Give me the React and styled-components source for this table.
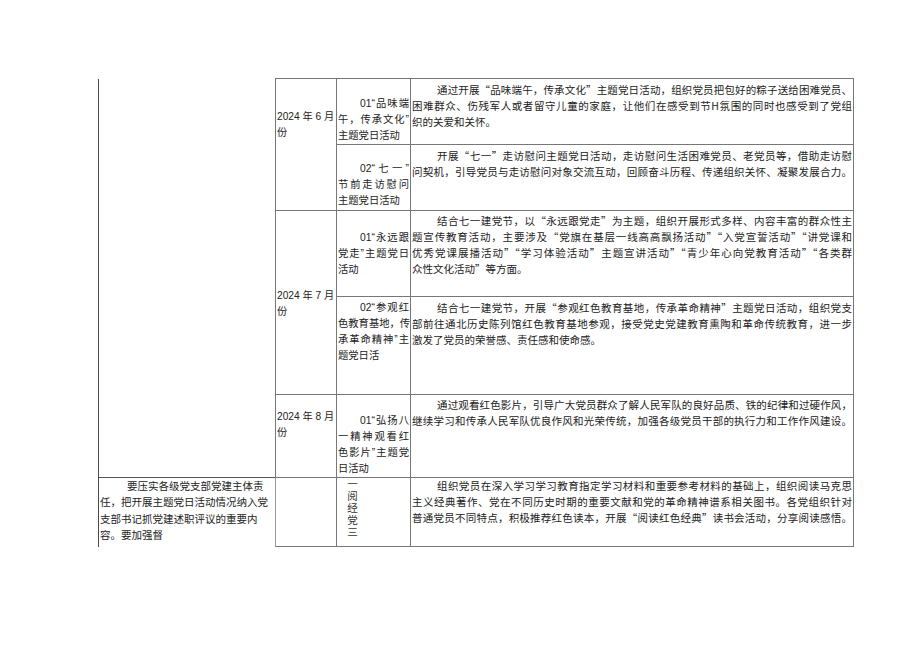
import React from 'react'
import styled, { createGlobalStyle } from 'styled-components'

const GlobalStyle = createGlobalStyle`
  body {
    margin: 0;
    background: #ffffff;
    color: #222222;
    font-family: "Noto Sans CJK SC", "Liberation Sans", sans-serif;
  }
`

const Page = styled.div`
  padding: 78px 0 0 98px;
`

const Table = styled.table`
  border-collapse: collapse;
  table-layout: fixed;
  width: 755px;
  font-size: 10.5px;
  line-height: 16px;
`

const Row = styled.tr`
  height: ${p => p.$h}px;
`

const cellBase = `
  vertical-align: top;
  padding: 0 1px;
  border: 1px solid #777;
`

const BlankCell = styled.td`
  border: none;
  border-left: 1px solid #4a4a4a;
  padding: 0;
`

const NoteCell = styled.td`
  vertical-align: top;
  padding: 0 2px 0 1px;
  border-left: 1px solid #4a4a4a;
  border-top: 1px solid #555;
  border-right: 1px solid #999;
  border-bottom: none;
  line-height: 16.3px;
`

const MonthCell = styled.td`
  ${cellBase}
  padding-top: ${p => p.$pt || 0}px;
  font-family: "Liberation Sans", "Noto Sans CJK SC", sans-serif;
  font-size: 10.2px;
`

const ActCell = styled.td`
  ${cellBase}
  padding-top: ${p => p.$pt || 0}px;
  font-family: "Liberation Sans", "Noto Sans CJK SC", sans-serif;
  font-size: 10.3px;
`

const DescCell = styled.td`
  ${cellBase}
  padding-top: ${p => p.$pt || 0}px;
`

const Line = styled.span`
  display: block;
  white-space: nowrap;
  text-indent: ${p => p.$indent || 0}px;
  text-align: ${p => (p.$fill ? 'justify' : 'left')};
  text-align-last: ${p => (p.$fill ? 'justify' : 'auto')};
`

const Vertical = styled.div`
  width: 11px;
  margin-left: 9px;
  line-height: 12px;
  font-size: 10.5px;
  text-align: center;
  color: #333;
`

const Para = ({ lines, indent = 0, fillLast = false }) => (
  <>
    {lines.map((t, i) => (
      <Line key={i} $indent={i === 0 ? indent : 0} $fill={i < lines.length - 1 || fillLast}>
        {t}
      </Line>
    ))}
  </>
)

const Month = ({ n }) => (
  <>
    <Line>2024 年 {n} 月</Line>
    <Line>份</Line>
  </>
)

export default function App() {
  return (
    <Page>
      <GlobalStyle />
      <Table>
        <colgroup>
          <col style={{ width: 177 }} />
          <col style={{ width: 61 }} />
          <col style={{ width: 74 }} />
          <col style={{ width: 443 }} />
        </colgroup>
        <tbody>
          <Row $h={66}>
            <BlankCell rowSpan={5} />
            <MonthCell rowSpan={2} $pt={30}>
              <Month n={6} />
            </MonthCell>
            <ActCell $pt={17}>
              <Para indent={22} lines={['01“品味端', '午，传承文化”', '主题党日活动']} />
            </ActCell>
            <DescCell $pt={3}>
              <Para
                indent={25}
                lines={[
                  '通过开展“品味端午，传承文化”主题党日活动，组织党员把包好的粽子送给困难党员、',
                  '困难群众、伤残军人或者留守儿童的家庭，让他们在感受到节H氛围的同时也感受到了党组',
                  '织的关爱和关怀。',
                ]}
              />
            </DescCell>
          </Row>
          <Row $h={66}>
            <ActCell $pt={16}>
              <Para indent={22} lines={['02“七一”', '节前走访慰问', '主题党日活动']} />
            </ActCell>
            <DescCell $pt={3}>
              <Para
                indent={25}
                fillLast
                lines={[
                  '开展“七一”走访慰问主题党日活动，走访慰问生活困难党员、老党员等，借助走访慰',
                  '问契机，引导党员与走访慰问对象交流互动，回顾奋斗历程、传递组织关怀、凝聚发展合力。',
                ]}
              />
            </DescCell>
          </Row>
          <Row $h={86}>
            <MonthCell rowSpan={2} $pt={77}>
              <Month n={7} />
            </MonthCell>
            <ActCell $pt={19}>
              <Para indent={22} lines={['01“永远跟', '党走”主题党日', '活动']} />
            </ActCell>
            <DescCell $pt={2}>
              <Para
                indent={25}
                lines={[
                  '结合七一建党节，以“永远跟党走”为主题，组织开展形式多样、内容丰富的群众性主',
                  '题宣传教育活动，主要涉及“党旗在基层一线高高飘扬活动”“入党宣誓活动”“讲党课和',
                  '优秀党课展播活动”“学习体验活动”主题宣讲活动”“青少年心向党教育活动”“各类群',
                  '众性文化活动”等方面。',
                ]}
              />
            </DescCell>
          </Row>
          <Row $h={98}>
            <ActCell $pt={3}>
              <Para indent={22} lines={['02“参观红', '色教育基地，传', '承革命精神”主', '题党日活']} />
            </ActCell>
            <DescCell $pt={3}>
              <Para
                indent={25}
                lines={[
                  '结合七一建党节，开展“参观红色教育基地，传承革命精神”主题党日活动，组织党支',
                  '部前往通北历史陈列馆红色教育基地参观，接受党史党建教育熏陶和革命传统教育，进一步',
                  '激发了党员的荣誉感、责任感和使命感。',
                ]}
              />
            </DescCell>
          </Row>
          <Row $h={83}>
            <MonthCell $pt={14}>
              <Month n={8} />
            </MonthCell>
            <ActCell $pt={18}>
              <Para indent={22} lines={['01“弘扬八', '一精神观看红', '色影片”主题党', '日活动']} />
            </ActCell>
            <DescCell $pt={2}>
              <Para
                indent={25}
                fillLast
                lines={[
                  '通过观看红色影片，引导广大党员群众了解人民军队的良好品质、铁的纪律和过硬作风，',
                  '继续学习和传承人民军队优良作风和光荣传统，加强各级党员干部的执行力和工作作风建设。',
                ]}
              />
            </DescCell>
          </Row>
          <Row $h={69}>
            <NoteCell>
              <Line $indent={27}>要压实各级党支部党建主体责</Line>
              <Line>任，把开展主题党日活动情况纳入党</Line>
              <Line>支部书记抓党建述职评议的重要内</Line>
              <Line>容。要加强督</Line>
            </NoteCell>
            <MonthCell />
            <ActCell>
              <Vertical>
                {['一', '阅', '经', '党', '三'].map(c => (
                  <div key={c}>{c}</div>
                ))}
              </Vertical>
            </ActCell>
            <DescCell $pt={0}>
              <Para
                indent={25}
                fillLast
                lines={[
                  '组织党员在深入学习学习教育指定学习材料和重要参考材料的基础上，组织阅读马克思',
                  '主义经典著作、党在不同历史时期的重要文献和党的革命精神谱系相关图书。各党组织针对',
                  '普通党员不同特点，积极推荐红色读本，开展“阅读红色经典”读书会活动，分享阅读感悟。',
                ]}
              />
            </DescCell>
          </Row>
        </tbody>
      </Table>
    </Page>
  )
}
